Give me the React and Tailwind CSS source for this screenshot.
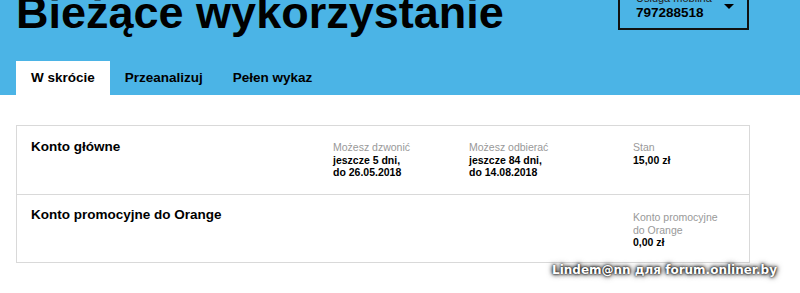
import React from "react";

function Caret() {
  return (
    <svg width="10" height="5" viewBox="0 0 10 5" className="absolute right-[13px] top-[18px]">
      <polygon points="0,0 10,0 5,5" fill="#000" />
    </svg>
  );
}

function Col({ label, lines, className }) {
  return (
    <div className={"text-[10.5px] leading-[12.5px] " + className}>
      {label.map((l, i) => (
        <div key={"l" + i} className="text-[#999]">{l}</div>
      ))}
      {lines.map((l, i) => (
        <div key={"v" + i} className="font-bold text-black">{l}</div>
      ))}
    </div>
  );
}

export default function App() {
  return (
    <div className="relative h-[293px] w-[800px] overflow-hidden bg-white font-['Liberation_Sans',Arial,sans-serif] text-black">
      <header className="h-[95px] overflow-hidden bg-[#4bb4e6]">
        <div className="ml-4 flex h-[61px] w-[733px] items-start justify-between">
          <h1 className="mt-[-10px] text-[45px] font-bold leading-none whitespace-nowrap">
            Bieżące wykorzystanie
          </h1>
          <div className="relative mt-[-16px] flex h-[46px] w-[131px] flex-col border-2 border-[#111] px-[16px] pt-[5px]">
            <div className="text-[11px] leading-[14px] text-[#222]">Usługa mobilna</div>
            <div className="text-[13.5px] font-bold leading-[16px]">797288518</div>
            <Caret />
          </div>
        </div>
        <nav className="ml-4 flex h-[34px] text-[13.5px] font-bold leading-[34px]">
          <div className="bg-white px-[15px]">W skrócie</div>
          <div className="px-[15px]">Przeanalizuj</div>
          <div className="px-[15px]">Pełen wykaz</div>
        </nav>
      </header>

      <main className="ml-4 mt-[30px] w-[734px] border border-[#d9d9d9]">
        <div className="flex h-[69px] border-b border-[#d9d9d9] pl-[14px] pt-[13px]">
          <div className="w-[302px] text-[13.5px] font-bold leading-[16px]">Konto główne</div>
          <Col className="w-[136px] pt-[2px]" label={["Możesz dzwonić"]} lines={["jeszcze 5 dni,", "do 26.05.2018"]} />
          <Col className="w-[164px] pt-[2px]" label={["Możesz odbierać"]} lines={["jeszcze 84 dni,", "do 14.08.2018"]} />
          <Col className="flex-1 pt-[2px]" label={["Stan"]} lines={["15,00 zł"]} />
        </div>
        <div className="flex h-[67px] pl-[14px] pt-[12px]">
          <div className="w-[602px] text-[13.5px] font-bold leading-[16px]">Konto promocyjne do Orange</div>
          <Col className="flex-1 pt-[4px]" label={["Konto promocyjne", "do Orange"]} lines={["0,00 zł"]} />
        </div>
      </main>

      <div className="absolute left-[552px] top-[263px] whitespace-nowrap font-['DejaVu_Sans',sans-serif] text-[12px] font-bold leading-[14px] text-white [text-shadow:0_0_2px_#000,0_0_4px_#000,0_0_6px_#555]">
        Lindem@nn для forum.onliner.by
      </div>
    </div>
  );
}
